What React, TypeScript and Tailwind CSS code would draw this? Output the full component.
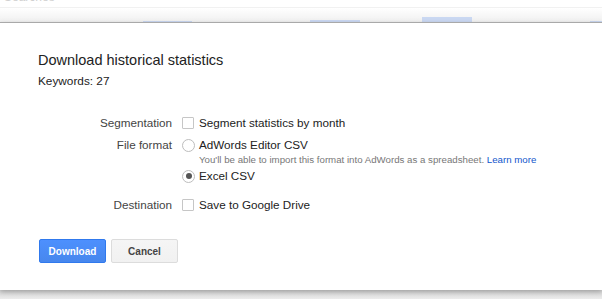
import React from "react";

function Checkbox() {
  return <span className="block w-[12px] h-[12px] border border-[#c6c6c6] rounded-[1px] bg-white shrink-0" />;
}

function Radio({ checked }: { checked?: boolean }) {
  return (
    <span className="flex items-center justify-center w-[13px] h-[13px] rounded-full border border-[#bdbdbd] bg-white shrink-0">
      {checked ? <span className="block w-[6px] h-[6px] rounded-full bg-[#555]" /> : null}
    </span>
  );
}

export default function App() {
  const bars = [
    { left: 143, width: 49, top: 21 },
    { left: 310, width: 50, top: 20 },
    { left: 422, width: 50, top: 17 },
    { left: 590, width: 20, top: 21 },
  ];
  return (
    <div
      className="w-[602px] h-[299px] overflow-hidden flex flex-col bg-[#ececec]"
      style={{ fontFamily: '"Liberation Sans", Arial, sans-serif' }}
    >
      {/* background page strip */}
      <div className="relative h-[22px] shrink-0 bg-white">
        <div className="absolute left-[4px] top-[-9px] text-[12px] leading-[12px] text-[#d0d0d0]">Searches</div>
        <div className="absolute left-0 right-0 top-[7px] h-px bg-[#f1f1f1]" />
        <div className="absolute left-0 right-0 top-[8px] bottom-0 bg-gradient-to-b from-white to-[#f0f0f0]" />
        {bars.map((b, i) => (
          <div
            key={i}
            className="absolute bottom-0 bg-[#cad8f2]"
            style={{ left: b.left, width: b.width, top: b.top }}
          />
        ))}
      </div>

      {/* dialog */}
      <div className="relative z-10 h-[268px] shrink-0 bg-white border-t border-[#a9a9a9] shadow-[0_2px_5px_rgba(0,0,0,0.25)] pl-[38px] pt-[27px]">
        <div className="text-[14.5px] leading-[20px] text-[#222]">Download historical statistics</div>
        <div className="mt-[3px] text-[11.8px] leading-[16px] text-[#222]">Keywords: 27</div>

        <div className="mt-[25px] flex items-center h-[18px] text-[11.7px]">
          <div className="w-[134px] text-right text-[#444]">Segmentation</div>
          <div className="ml-[10px] flex items-center gap-[5px] text-[#222]">
            <Checkbox />
            <span>Segment statistics by month</span>
          </div>
        </div>

        <div className="mt-[4px] flex text-[11.7px]">
          <div className="w-[134px] h-[18px] flex items-center justify-end text-[#444]">File format</div>
          <div className="ml-[10px] flex flex-col">
            <div className="flex items-center h-[18px] gap-[4px] text-[#222]">
              <Radio />
              <span>AdWords Editor CSV</span>
            </div>
            <div className="pl-[17px] h-[12px] text-[9.7px] leading-[12px] text-[#777]">
              You'll be able to import this format into AdWords as a spreadsheet.{" "}
              <span className="text-[#15c]">Learn more</span>
            </div>
            <div className="mt-[1px] flex items-center h-[18px] gap-[4px] text-[#222]">
              <Radio checked />
              <span>Excel CSV</span>
            </div>
          </div>
        </div>

        <div className="mt-[11px] flex items-center h-[18px] text-[11.7px]">
          <div className="w-[134px] text-right text-[#444]">Destination</div>
          <div className="ml-[10px] flex items-center gap-[5px] text-[#222]">
            <Checkbox />
            <span>Save to Google Drive</span>
          </div>
        </div>

        <div className="mt-[25px] ml-px flex gap-[5px]">
          <button className="w-[67px] h-[24px] rounded-[2px] border border-[#3079ed] bg-gradient-to-b from-[#4d90fe] to-[#4787ed] text-white text-[10px] font-bold">
            Download
          </button>
          <button className="w-[67px] h-[24px] rounded-[2px] border border-[#dcdcdc] bg-gradient-to-b from-[#f5f5f5] to-[#f1f1f1] text-[#444] text-[10px] font-bold">
            Cancel
          </button>
        </div>
      </div>

      <div className="flex-1 bg-gradient-to-b from-[#d6d6d6] to-[#ececec]" />
    </div>
  );
}
